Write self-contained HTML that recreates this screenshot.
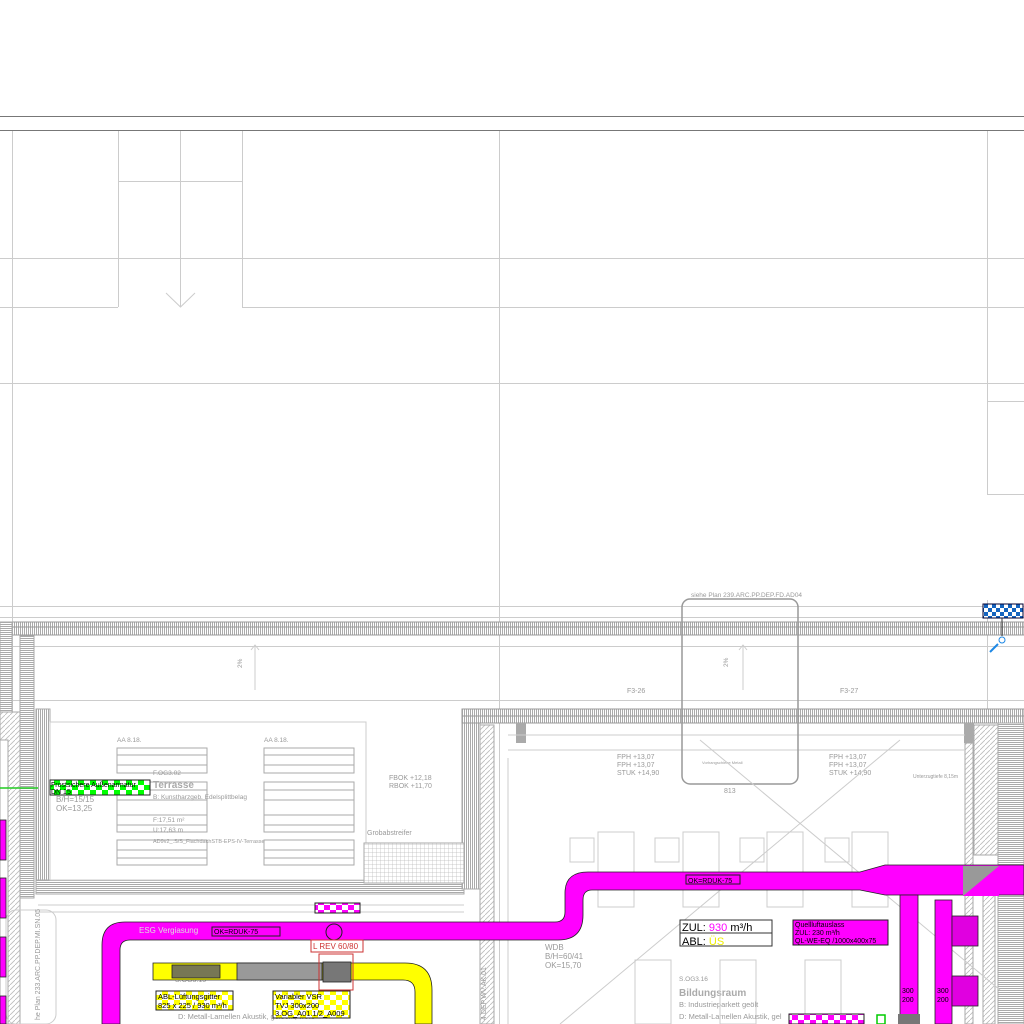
<!DOCTYPE html>
<html><head><meta charset="utf-8"><style>
html,body{margin:0;padding:0;background:#fff;width:1024px;height:1024px;overflow:hidden}
svg{display:block}
text{font-family:"Liberation Sans",sans-serif}
</style></head><body>
<svg width="1024" height="1024" viewBox="0 0 1024 1024" xmlns="http://www.w3.org/2000/svg">
<defs>
<pattern id="vh" width="2" height="4" patternUnits="userSpaceOnUse"><rect width="2" height="4" fill="#fff"/><rect width="1" height="4" fill="#aaa"/></pattern>
<pattern id="hh" width="4" height="2" patternUnits="userSpaceOnUse"><rect width="4" height="2" fill="#fff"/><rect width="4" height="1" fill="#aaa"/></pattern>
<pattern id="dh" width="5" height="5" patternUnits="userSpaceOnUse"><rect width="5" height="5" fill="#fff"/><path d="M0 5L5 0" stroke="#bbb" stroke-width="0.8"/></pattern>
<pattern id="grid" width="4" height="4" patternUnits="userSpaceOnUse"><rect width="4" height="4" fill="#fff"/><path d="M0 0H4M0 0V4" stroke="#bbb" stroke-width="0.7"/></pattern>
<pattern id="gck" width="12" height="10" patternUnits="userSpaceOnUse"><rect width="12" height="10" fill="#0f0"/><rect width="6" height="5" fill="#fff"/><rect x="6" y="5" width="6" height="5" fill="#fff"/></pattern>
<pattern id="yck" width="12" height="10" patternUnits="userSpaceOnUse"><rect width="12" height="10" fill="#ff0"/><rect width="6" height="5" fill="#fff"/><rect x="6" y="5" width="6" height="5" fill="#fff"/></pattern>
<pattern id="mck" width="12" height="10" patternUnits="userSpaceOnUse"><rect width="12" height="10" fill="#f0f"/><rect width="6" height="5" fill="#fff"/><rect x="6" y="5" width="6" height="5" fill="#fff"/></pattern>
<pattern id="bck" width="8" height="8" patternUnits="userSpaceOnUse"><rect width="8" height="8" fill="#1565c0"/><rect width="4" height="4" fill="#fff"/><rect x="4" y="4" width="4" height="4" fill="#fff"/></pattern>
</defs>

<!-- top frame -->
<g stroke="#777" stroke-width="1"><line x1="0" y1="116.5" x2="1024" y2="116.5"/><line x1="0" y1="130.5" x2="1024" y2="130.5"/></g>
<g stroke="#ccc" stroke-width="1" fill="none">
<line x1="12.5" y1="131" x2="12.5" y2="1024"/>
<line x1="118.5" y1="131" x2="118.5" y2="307"/>
<line x1="180.5" y1="131" x2="180.5" y2="307"/>
<line x1="242.5" y1="131" x2="242.5" y2="307"/>
<line x1="118" y1="181.5" x2="243" y2="181.5"/>
<line x1="0" y1="258.5" x2="1024" y2="258.5"/>
<line x1="0" y1="307.5" x2="118" y2="307.5"/>
<line x1="242" y1="307.5" x2="1024" y2="307.5"/>
<path d="M166 293L180.5 307L195 293"/>
<line x1="0" y1="383.5" x2="1024" y2="383.5"/>
<line x1="499.5" y1="131" x2="499.5" y2="1024"/>
<line x1="987.5" y1="131" x2="987.5" y2="495"/>
<path d="M987.5 401.5H1024M987.5 494.5H1024"/>
<line x1="0" y1="606.5" x2="1024" y2="606.5"/>
<line x1="0" y1="617.5" x2="1024" y2="617.5"/>
<line x1="0" y1="646.5" x2="1024" y2="646.5"/>
<line x1="0" y1="700.5" x2="1024" y2="700.5"/>
<line x1="987.5" y1="600" x2="987.5" y2="710"/>
</g>

<!-- parapet band top -->
<rect x="0" y="622" width="1024" height="13" fill="url(#vh)" stroke="#999"/>
<line x1="0" y1="627" x2="1024" y2="627" stroke="#999"/>
<!-- left vertical wall -->
<rect x="0" y="622" width="12" height="90" fill="url(#hh)" stroke="#aaa"/>
<rect x="20" y="636" width="14" height="262" fill="url(#hh)" stroke="#aaa"/>
<rect x="0" y="712" width="20" height="312" fill="url(#dh)" stroke="#aaa"/>
<rect x="0" y="740" width="8" height="284" fill="#fff" stroke="#aaa"/>
<!-- terrace frame -->
<rect x="36" y="709" width="14" height="180" fill="url(#vh)" stroke="#aaa"/>
<rect x="36" y="880" width="428" height="14" fill="url(#hh)" stroke="#aaa"/>
<rect x="462" y="709" width="18" height="180" fill="url(#vh)" stroke="#aaa"/>
<rect x="462" y="709" width="562" height="14" fill="url(#vh)" stroke="#999"/>
<line x1="462" y1="716" x2="1024" y2="716" stroke="#999"/>
<rect x="480" y="725" width="14" height="299" fill="url(#dh)" stroke="#aaa"/>
<rect x="964" y="723" width="10" height="20" fill="#aaa"/>
<rect x="516" y="723" width="10" height="20" fill="#aaa"/>
<rect x="974" y="725" width="24" height="130" fill="url(#dh)" stroke="#aaa"/>
<rect x="998" y="723" width="26" height="301" fill="url(#hh)" stroke="#aaa"/>
<rect x="965" y="743" width="8" height="281" fill="url(#dh)" stroke="#aaa"/>
<rect x="983" y="895" width="12" height="129" fill="url(#dh)" stroke="#aaa"/>
<g stroke="#ccc" fill="none">
<rect x="50" y="722" width="316" height="158"/>
<path d="M508 750H965M508 735H965M508 758H508V1024"/>
<rect x="364" y="843" width="100" height="40" fill="url(#grid)" stroke="#aaa"/>
<path d="M255 645V690M251 650L255 645L259 650M743 645V690M739 650L743 645L747 650"/>
<path d="M38 905H464M38 912H464"/>
<rect x="6" y="910" width="50" height="114" rx="10"/>
</g>
<!-- terrace slats -->
<g fill="none" stroke="#aaa">
<rect x="117" y="748" width="90" height="25"/><rect x="117" y="782" width="90" height="50"/><rect x="117" y="840" width="90" height="25"/>
<rect x="264" y="748" width="90" height="25"/><rect x="264" y="782" width="90" height="50"/><rect x="264" y="840" width="90" height="25"/>
<path d="M117 755H207M117 765H207M117 790H207M117 800H207M117 815H207M117 825H207M117 850H207M117 858H207M264 755H354M264 765H354M264 790H354M264 800H354M264 815H354M264 825H354M264 850H354M264 858H354"/>
</g>
<!-- window box -->
<rect x="682" y="599" width="116" height="185" rx="8" fill="none" stroke="#999" stroke-width="1.5"/>
<g fill="#999" font-size="6.5">
<text x="691" y="597">siehe Plan 239.ARC.PP.DEP.FD.AD04</text>
<text x="234" y="668" transform="rotate(-90 238 664)">2%</text>
<text x="720" y="667" transform="rotate(-90 724 663)">2%</text>
<text x="627" y="693" font-size="7">F3-26</text><text x="840" y="693" font-size="7">F3-27</text>
<text x="617" y="759" font-size="7">FPH +13,07</text><text x="617" y="767" font-size="7">FPH +13,07</text><text x="617" y="775" font-size="7">STUK +14,90</text>
<text x="829" y="759" font-size="7">FPH +13,07</text><text x="829" y="767" font-size="7">FPH +13,07</text><text x="829" y="775" font-size="7">STUK +14,90</text>
<text x="702" y="764" font-size="4">Vorhangschiene Metall</text>
<text x="724" y="793" font-size="7">813</text>
<text x="913" y="778" font-size="5">Unterzugtiefe 8,15m</text>
<text x="117" y="742">AA 8.18.</text><text x="264" y="742">AA 8.18.</text>
<text x="153" y="775">F.OG3.02</text>
<text x="153" y="788" font-size="10" font-weight="bold" fill="#aaa">Terrasse</text>
<text x="153" y="799">B: Kunstharzgeb. Edelsplittbelag</text>
<text x="153" y="822">F:17,51 m²</text><text x="153" y="832">U:17,63 m</text>
<text x="153" y="843" font-size="5.5">AD9v2_.S/S_FlachdachSTB-EPS-IV-Terrasse</text>
<text x="56" y="802" font-size="8">B/H=15/15</text><text x="56" y="811" font-size="8">OK=13,25</text>
<text x="389" y="780" font-size="7">FBOK +12,18</text><text x="389" y="788" font-size="7">RBOK +11,70</text>
<text x="367" y="835" font-size="7">Grobabstreifer</text>
<text x="545" y="950" font-size="8">WDB</text><text x="545" y="959" font-size="8">B/H=60/41</text><text x="545" y="968" font-size="8">OK=15,70</text>
<text x="679" y="981" font-size="6.5">S.OG3.16</text>
<text x="679" y="996" font-size="10" font-weight="bold" fill="#aaa">Bildungsraum</text>
<text x="679" y="1007" font-size="7.5">B: Industrieparkett geölt</text>
<text x="679" y="1019" font-size="7.5">D: Metall-Lamellen Akustik, gel</text>
<text x="178" y="1019" font-size="7.5">D: Metall-Lamellen Akustik, gelocht, weiß</text>
<text x="175" y="982" font-size="7">S.OG3.15</text>
<text x="36" y="1024" font-size="7" transform="rotate(-90 36 1020)">he Plan 233.ARC.PP.DEP.MI.SN.05</text>
<text x="482" y="1024" font-size="7" transform="rotate(-90 482 1020)">4.DEP.WV.AK.01</text>
</g>
<!-- chairs/tables grid -->
<g fill="none" stroke="#ccc">
<rect x="570" y="838" width="24" height="24"/><rect x="655" y="838" width="24" height="24"/><rect x="740" y="838" width="24" height="24"/><rect x="825" y="838" width="24" height="24"/>
<rect x="598" y="832" width="36" height="75"/><rect x="683" y="832" width="36" height="75"/><rect x="767" y="832" width="36" height="75"/><rect x="852" y="832" width="36" height="75"/>
<rect x="635" y="960" width="36" height="64"/><rect x="720" y="960" width="36" height="64"/><rect x="805" y="960" width="36" height="64"/>
<line x1="560" y1="1024" x2="900" y2="740"/><line x1="700" y1="740" x2="1000" y2="990"/>
</g>
<!-- blue tag -->
<rect x="983" y="604" width="40" height="14" fill="url(#bck)" stroke="#003"/>
<line x1="1002" y1="618" x2="1002" y2="636" stroke="#333"/><circle cx="1002" cy="640" r="3" fill="#fff" stroke="#1e88e5"/>
<path d="M998 644L990 652" stroke="#1e88e5" stroke-width="2"/>
<!-- magenta ducts -->
<g fill="#f0f" stroke="#222" stroke-width="0.8">
<path d="M102 1024V945Q102 922 125 922H555Q565 922 565 912V893Q565 872 588 872H860L885 865H1024V895H885L860 890H592Q583 890 583 900V915Q583 940 558 940H130Q120 940 120 950V1024Z"/>
<rect x="900" y="895" width="18" height="129"/>
<rect x="935" y="900" width="17" height="124"/>
<rect x="952" y="916" width="26" height="30" fill="#e000e0"/><rect x="952" y="976" width="26" height="30" fill="#e000e0"/>
<rect x="0" y="820" width="6" height="40"/><rect x="0" y="878" width="6" height="40"/><rect x="0" y="937" width="6" height="40"/><rect x="0" y="996" width="6" height="28"/>
</g>
<rect x="963" y="866" width="36" height="30" fill="#999"/>
<path d="M963 896L999 866V896Z" fill="#f0f"/>
<rect x="315" y="903" width="45" height="10" fill="url(#mck)" stroke="#222"/>
<rect x="789" y="1014" width="75" height="10" fill="url(#mck)" stroke="#222"/>
<circle cx="334" cy="932" r="8" fill="none" stroke="#222"/>
<!-- yellow duct -->
<g stroke="#222" stroke-width="0.8">
<path d="M153 963H405Q432 963 432 990V1024H415V992Q415 980 403 980H153Z" fill="#ff0"/>
<rect x="237" y="963" width="85" height="17" fill="#999"/>
<rect x="172" y="965" width="48" height="13" fill="#775" />
<rect x="323" y="962" width="28" height="20" fill="#777"/>
</g>
<rect x="319" y="954" width="34" height="36" fill="none" stroke="#c33"/>
<rect x="311" y="940" width="52" height="12" fill="#fff" stroke="#c33"/>
<text x="313" y="949" font-size="8" fill="#c33">L  REV 60/80</text>
<!-- labels -->
<rect x="50" y="780" width="100" height="15" fill="url(#gck)" stroke="#222"/>
<text x="51" y="787" font-size="7" fill="#000">Frostsichere Außenarmatur</text>
<text x="51" y="794" font-size="7" fill="#000">DN 15</text>
<line x1="0" y1="788" x2="38" y2="788" stroke="#2c2" stroke-width="1.5"/>
<rect x="156" y="991" width="77" height="19" fill="url(#yck)" stroke="#222"/>
<text x="158" y="999" font-size="7.5" fill="#000">ABL-Lüftungsgitter</text>
<text x="158" y="1008" font-size="7.5" fill="#000">825 x 225 / 930 m³/h</text>
<rect x="273" y="991" width="77" height="27" fill="url(#yck)" stroke="#222"/>
<text x="275" y="999" font-size="7.5" fill="#000">Variabler VSR</text>
<text x="275" y="1008" font-size="7.5" fill="#000">TVJ 300x200</text>
<text x="275" y="1016" font-size="7.5" fill="#000">3.OG_A01.1/2_A009</text>
<rect x="680" y="920" width="92" height="26" fill="#fff" stroke="#333"/>
<line x1="680" y1="933" x2="772" y2="933" stroke="#333"/>
<text x="682" y="931" font-size="11" fill="#000">ZUL: <tspan fill="#f0f">930</tspan> m³/h</text>
<text x="682" y="945" font-size="11" fill="#000">ABL: <tspan fill="#ee0">ÜS</tspan></text>
<rect x="793" y="920" width="95" height="25" fill="#f0f" stroke="#222"/>
<text x="795" y="927" font-size="7" fill="#000">Quellluftauslass</text>
<text x="795" y="935" font-size="7" fill="#000">ZUL: 230 m³/h</text>
<text x="795" y="943" font-size="7" fill="#000">QL-WE-EQ /1000x400x75</text>
<g font-size="7" fill="#000">
<rect x="212" y="927" width="68" height="9" fill="none" stroke="#222"/><text x="214" y="934">OK=RDUK-75</text>
<rect x="686" y="875" width="54" height="9" fill="none" stroke="#222"/><text x="688" y="883">OK=RDUK-75</text>
<text x="139" y="933" fill="#ddd" font-size="8">ESG Vergiasung</text>
</g>
<g font-size="7" fill="#000">
<text x="902" y="993">300</text><text x="902" y="1002">200</text>
<text x="937" y="993">300</text><text x="937" y="1002">200</text>
</g>
<rect x="898" y="1014" width="22" height="10" fill="#777"/>
<rect x="877" y="1015" width="8" height="9" fill="none" stroke="#0c0" stroke-width="1.5"/>
</svg>
</body></html>
